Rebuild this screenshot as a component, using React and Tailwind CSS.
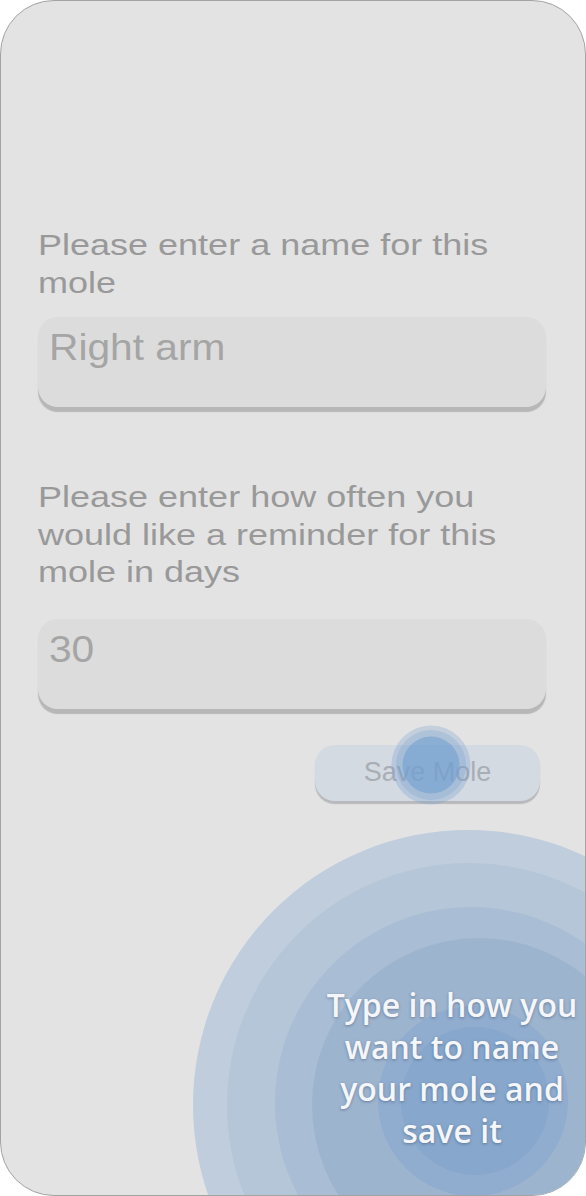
import React from 'react';

// --- tutorial overlay rings ---
const Spotlight = () => (
  <svg className="absolute inset-0 pointer-events-none" width="586" height="1196" viewBox="0 0 586 1196">
    <circle cx="467" cy="1104" r="275" fill="#bfcddc" />
    <circle cx="468" cy="1104" r="242" fill="#b5c6d8" />
    <circle cx="470" cy="1102" r="196" fill="#a9bdd4" />
    <circle cx="478" cy="1104" r="167" fill="#9db4cf" />
    <circle cx="472" cy="1100" r="95" fill="#90acce" />
    <circle cx="474" cy="1100" r="74" fill="#87a7cc" />
    <circle cx="430" cy="764" r="39.5" fill="rgba(110,155,205,0.28)" />
    <circle cx="430" cy="764" r="35" fill="rgba(110,155,205,0.25)" />
    <circle cx="430" cy="764" r="28.5" fill="rgba(115,160,208,0.6)" />
  </svg>
);

const FieldBox = ({ value }) => (
  <div className="h-[90px] rounded-[20px] bg-[#dcdcdc] shadow-[0_5px_1px_#b7b7b7] pl-[11px] pt-[10px] text-[36px] leading-[41px] text-[#a5a5a5]">
    <span className="inline-block origin-left scale-x-113">{value}</span>
  </div>
);

const Label = ({ children, className = '' }) => (
  <p className={`text-[30px] leading-[37.5px] text-[#999999] ${className}`}>
    <span className="inline-block origin-left scale-x-120">{children}</span>
  </p>
);

export default function App() {
  return (
    <div className="w-[586px] h-[1196px] bg-white" style={{ fontFamily: '"Liberation Sans", Arial, sans-serif' }}>
      <div className="relative w-full h-full rounded-[54px] border border-[#a3a3a3] bg-[#e3e3e3] overflow-hidden">
        <div className="pl-[37px] pr-[39px] pt-[225px]">
          <Label>Please enter a name for this<br />mole</Label>
          <div className="mt-[16px]">
            <FieldBox value="Right arm" />
          </div>

          <Label className="mt-[71px]">
            Please enter how often you<br />would like a reminder for this<br />mole in days
          </Label>
          <div className="mt-[28px]">
            <FieldBox value="30" />
          </div>

          <div className="flex justify-end mt-[36px] pr-[6px]">
            <button className="w-[225px] h-[56px] rounded-[20px] bg-[#d4dae2] shadow-[0_3px_1px_#b8b9bc] text-[27px] text-[#a9aeb4]">
              Save Mole
            </button>
          </div>
        </div>

        <Spotlight />

        <div
          className="absolute left-[311px] top-[983px] w-[280px] text-center text-[32px] leading-[42px] font-semibold text-[#f4f6f9] [text-shadow:0_1px_3px_rgba(40,60,90,0.45)]"
          style={{ fontFamily: '"Open Sans", "Noto Sans", sans-serif' }}
        >
          Type in how you<br />want to name<br />your mole and<br />save it
        </div>
      </div>
    </div>
  );
}
